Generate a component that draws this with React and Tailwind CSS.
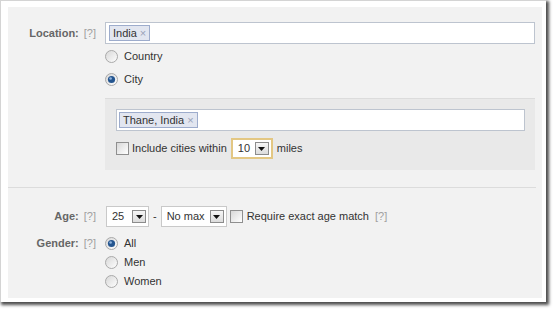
import React from "react";

function Radio({ checked }) {
  return (
    <svg width="13" height="13" viewBox="0 0 13 13" className="shrink-0">
      <defs>
        <linearGradient id={checked ? "rgOn" : "rgOff"} x1="0" y1="0" x2="1" y2="1">
          <stop offset="0" stopColor="#d6d6d6" />
          <stop offset="1" stopColor="#ffffff" />
        </linearGradient>
      </defs>
      <circle cx="6.5" cy="6.5" r="6" fill={`url(#${checked ? "rgOn" : "rgOff"})`} stroke="#a9a9a9" />
      {checked && (
        <>
          <circle cx="6.5" cy="6.5" r="3.6" fill="#24558f" />
          <circle cx="5.6" cy="5.5" r="1.3" fill="#8fb3dc" />
        </>
      )}
    </svg>
  );
}

function Checkbox() {
  return <span className="block h-[13px] w-[13px] shrink-0 border border-[#8f8f8f] bg-gradient-to-br from-[#d8d8d8] to-white" />;
}

function Arrow() {
  return (
    <span className="flex h-[13px] w-[14px] items-center justify-center border border-[#8c8c8c] bg-gradient-to-b from-[#f6f6f6] to-[#dcdcdc]">
      <svg width="7" height="4" viewBox="0 0 7 4">
        <path d="M0 0h7L3.5 4z" fill="#111" />
      </svg>
    </span>
  );
}

function Select({ value, width, focus }) {
  return (
    <span
      className={
        "flex h-[21px] items-center justify-between bg-white pl-[5px] pr-[2px] text-[#333] " +
        (focus ? "border-2 border-[#e3c783] pl-[4px] pr-[1px]" : "border border-[#c9c9c9]")
      }
      style={{ width }}
    >
      {value}
      <Arrow />
    </span>
  );
}

function Token({ children }) {
  return (
    <span className="flex h-[16px] items-center border border-[#9daccc] bg-[#e2e6f0] px-[3px] text-[#333]">
      {children}
      <span className="ml-[3px] text-[#9aa3b8]">×</span>
    </span>
  );
}

function Help() {
  return <span className="ml-[5px] text-[#a0a0a0]">[?]</span>;
}

function Label({ text, className = "" }) {
  return (
    <div className={"flex w-[97px] shrink-0 items-center justify-end pr-[9px] " + className}>
      <span className="font-bold text-[#666]">{text}</span>
      <Help />
    </div>
  );
}

function RadioRow({ label, checked, h = "h-[23px]" }) {
  return (
    <div className={"flex items-center " + h}>
      <Radio checked={checked} />
      <span className="ml-[6px] text-[#333]">{label}</span>
    </div>
  );
}

export default function App() {
  return (
    <div className="h-[310px] w-[554px] bg-white font-['Liberation_Sans',Arial,sans-serif] text-[11px]">
      <div className="h-[302px] w-[546px] border-l border-t border-[#d4d4d4] bg-white pl-[7px] pt-[6px] shadow-[2px_2px_3px_1px_rgba(0,0,0,0.7)]">
        <div className="h-[291px] w-[534px] bg-[#f2f2f2] pt-[15px]">
          <div className="flex">
            <Label text="Location:" className="h-[22px]" />
            <div className="flex-1 pr-[7px]">
              <div className="flex h-[22px] items-center border border-[#bdc4cf] bg-white pl-[3px]">
                <Token>India</Token>
              </div>
              <div className="mt-[1px]">
                <RadioRow label="Country" />
                <RadioRow label="City" checked />
              </div>
              <div className="mt-[7px] border-t border-[#dcdcdc] bg-[#e9e9e9] pb-[11px] pl-[11px] pr-[10px] pt-[10px]">
                <div className="flex h-[22px] items-center border border-[#bdc4cf] bg-white pl-[2px]">
                  <Token>Thane, India</Token>
                </div>
                <div className="mt-[7px] flex h-[21px] items-center text-[#333]">
                  <Checkbox />
                  <span className="ml-[3px] mr-[4px]">Include cities within</span>
                  <Select value="10" width={42} focus />
                  <span className="ml-[4px]">miles</span>
                </div>
              </div>
            </div>
          </div>

          <div className="mr-[6px] mt-[17px] border-t border-[#dcdcdc]" />

          <div className="mt-[18px] flex h-[21px]">
            <Label text="Age:" />
            <div className="flex items-center pl-[1px] text-[#333]">
              <Select value="25" width={43} />
              <span className="mx-[4px]">-</span>
              <Select value="No max" width={66} />
              <span className="ml-[3px]">
                <Checkbox />
              </span>
              <span className="ml-[4px]">Require exact age match</span>
              <span className="ml-[1px]">
                <Help />
              </span>
            </div>
          </div>

          <div className="mt-[7px] flex">
            <Label text="Gender:" className="h-[19px]" />
            <div>
              <RadioRow label="All" checked h="h-[19px]" />
              <RadioRow label="Men" h="h-[19px]" />
              <RadioRow label="Women" h="h-[19px]" />
            </div>
          </div>
        </div>
      </div>
    </div>
  );
}
